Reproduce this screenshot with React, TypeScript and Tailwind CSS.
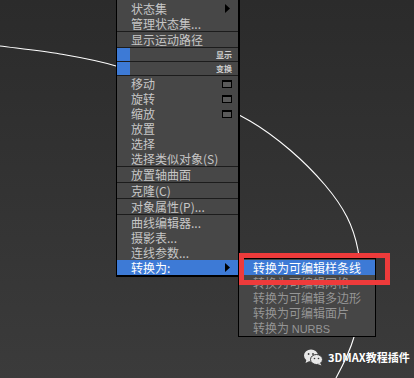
import React from "react";

const pts: [number, number][] = [
  [-20, 43],
  [0, 46],
  [60, 54],
  [116, 66],
  [190, 92],
  [250, 121],
  [290, 150],
  [325, 185],
  [347, 217],
  [358, 250],
  [361, 290],
  [354, 337],
  [336, 378],
  [320, 400],
];

function smoothPath(p: [number, number][]) {
  let d = `M ${p[0][0]} ${p[0][1]}`;
  for (let i = 0; i < p.length - 1; i++) {
    const p0 = p[i - 1] || p[i];
    const p1 = p[i];
    const p2 = p[i + 1];
    const p3 = p[i + 2] || p2;
    const c1x = p1[0] + (p2[0] - p0[0]) / 6;
    const c1y = p1[1] + (p2[1] - p0[1]) / 6;
    const c2x = p2[0] - (p3[0] - p1[0]) / 6;
    const c2y = p2[1] - (p3[1] - p1[1]) / 6;
    d += ` C ${c1x} ${c1y}, ${c2x} ${c2y}, ${p2[0]} ${p2[1]}`;
  }
  return d;
}

const font = { fontFamily: '"Noto Sans CJK SC", "Noto Sans", sans-serif' };

function Row({ children, right }: { children: React.ReactNode; right?: React.ReactNode }) {
  return (
    <div className="flex h-[15px] items-center pl-[14px] pr-[6px] text-[12px] leading-[15px] text-[#c6c6c6]">
      <span className="flex-1 whitespace-nowrap">{children}</span>
      {right}
    </div>
  );
}

const Sep = () => <div className="h-px bg-[#1c1c1c]" />;

const Arrow = ({ color = "#000" }: { color?: string }) => (
  <svg width="5" height="9" viewBox="0 0 5 9" className="mr-[2px]">
    <path d="M0 0 L5 4.5 L0 9 Z" fill={color} />
  </svg>
);

const WinIcon = () => (
  <div className="h-[8px] w-[10px] border border-black border-t-2 bg-[#5a5a5a]" />
);

function BlueTag({ label }: { label: string }) {
  return (
    <div className="flex h-[13px] items-center">
      <div className="h-full w-[13px] bg-[#3d7ad6]" />
      <div className="flex-1" />
      <span className="pr-[6px] text-[8px] font-bold leading-[13px] text-[#cfcfcf]">{label}</span>
    </div>
  );
}

export default function App() {
  return (
    <div
      className="relative h-[378px] w-[414px] overflow-hidden bg-gradient-to-b from-[#2b2b2b] to-[#3b3b3b]"
      style={font}
    >
      <svg className="absolute inset-0" width="414" height="378">
        <path d={smoothPath(pts)} stroke="#ffffff" strokeWidth="1.1" fill="none" />
      </svg>

      {/* main menu */}
      <div className="absolute left-[116px] top-0 w-[124px] border-l border-r-2 border-b-2 border-black bg-[#474747] pt-px">
        <Row right={<Arrow />}>状态集</Row>
        <Row>管理状态集...</Row>
        <Sep />
        <Row>显示运动路径</Row>
        <Sep />
        <BlueTag label="显示" />
        <Sep />
        <BlueTag label="变换" />
        <Sep />
        <Row right={<WinIcon />}>移动</Row>
        <Row right={<WinIcon />}>旋转</Row>
        <Row right={<WinIcon />}>缩放</Row>
        <Row>放置</Row>
        <Row>选择</Row>
        <Row>选择类似对象(S)</Row>
        <Sep />
        <Row>放置轴曲面</Row>
        <Sep />
        <Row>克隆(C)</Row>
        <Sep />
        <Row>对象属性(P)...</Row>
        <Sep />
        <Row>曲线编辑器...</Row>
        <Row>摄影表...</Row>
        <Row>连线参数...</Row>
        <div className="flex h-[15px] items-center bg-[#3d7ad6] pl-[14px] pr-[6px] text-[12px] leading-[15px] text-white">
          <span className="flex-1">转换为:</span>
          <Arrow />
        </div>
      </div>

      {/* submenu */}
      <div className="absolute left-[238px] top-[258px] h-[79px] w-[138px] border border-black bg-[#464646] pt-[1px]">
        <div className="h-[15px] bg-[#3d7ad6] pl-[14px] text-[12px] leading-[15px] text-white">转换为可编辑样条线</div>
        <div className="h-[15px] pl-[14px] text-[12px] leading-[15px] text-[#959595]">转换为可编辑网格</div>
        <div className="h-[15px] pl-[14px] text-[12px] leading-[15px] text-[#959595]">转换为可编辑多边形</div>
        <div className="h-[15px] pl-[14px] text-[12px] leading-[15px] text-[#959595]">转换为可编辑面片</div>
        <div className="h-[15px] pl-[14px] text-[12px] leading-[15px] text-[#959595]">
          转换为 <span style={{ fontFamily: '"Liberation Sans", sans-serif' }} className="text-[11px]">NURBS</span>
        </div>
      </div>

      {/* red highlight */}
      <div className="absolute left-[239px] top-[253px] h-[32px] w-[151px] border-[5px] border-[#ee3b3b]" />

      {/* watermark */}
      <div className="absolute left-[304px] top-[349px] flex items-center gap-[5px]">
        <svg width="19" height="17" viewBox="0 0 19 17">
          <ellipse cx="7" cy="6.5" rx="7" ry="6" fill="#e8e8e8" />
          <path d="M2.5 10.5 L1.5 14 L5.5 12 Z" fill="#e8e8e8" />
          <ellipse cx="12.5" cy="10.5" rx="6" ry="5" fill="#e8e8e8" stroke="#3a3a3a" strokeWidth="1" />
          <path d="M16 14 L17.5 16.5 L13.5 15 Z" fill="#e8e8e8" />
          <circle cx="4.6" cy="5" r="0.9" fill="#3a3a3a" />
          <circle cx="9" cy="5" r="0.9" fill="#3a3a3a" />
          <circle cx="10.5" cy="9.5" r="0.8" fill="#3a3a3a" />
          <circle cx="14.5" cy="9.5" r="0.8" fill="#3a3a3a" />
        </svg>
        <span className="text-[11px] font-bold leading-none text-white">3DMAX教程插件</span>
      </div>
    </div>
  );
}
